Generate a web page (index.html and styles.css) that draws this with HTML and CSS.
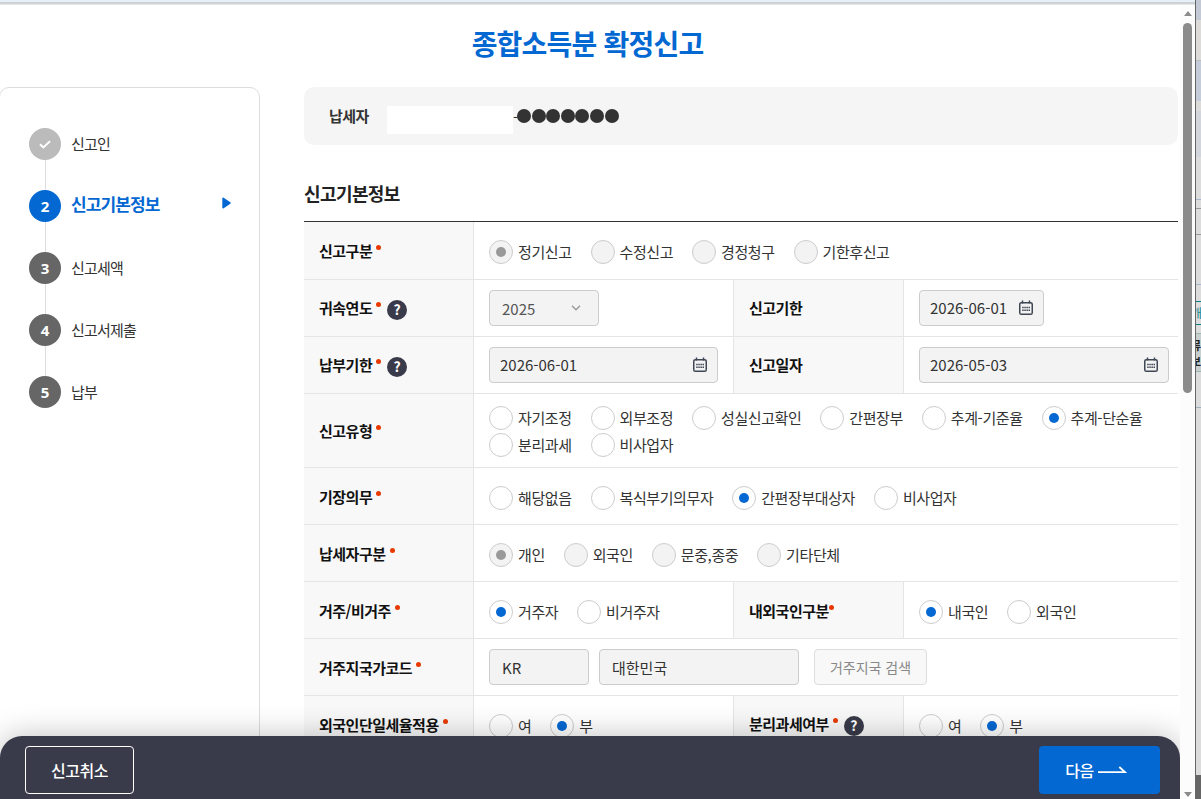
FILE: index.html
```html
<!DOCTYPE html>
<html lang="ko">
<head>
    <meta charset="UTF-8">
    <meta name="viewport" content="width=device-width, initial-scale=1.0">
    <title>종합소득분 확정신고</title>
    <link rel="stylesheet" href="styles.css">
</head>
<body>
    <svg width="0" height="0" class="defs">
        <symbol id="ico-cal" viewBox="0 0 16 16">
            <rect x="1.75" y="2.75" width="12.5" height="11.5" rx="1.6" fill="none" stroke="#3f4654" stroke-width="1.5"/>
            <path d="M4.5 .5v3M11.5 .5v3" stroke="#3f4654" stroke-width="1.5"/>
            <path d="M4.2 7.5h8M4.2 10.3h8" stroke="#3f4654" stroke-width="1.5" stroke-dasharray="1.5 .6"/>
        </symbol>
    </svg>

    <div class="window">
        <div class="popup">
            <h1>종합소득분 확정신고</h1>
            <div class="container">
                <aside class="steps">
                    <ol>
                        <li class="done"><span class="num"><svg width="12" height="9" viewBox="0 0 12 9"><path d="M1 4.2 4.3 7.4 11 1.2" fill="none" stroke="#fff" stroke-width="2"/></svg></span><span class="name">신고인</span></li>
                        <li class="on"><span class="num">2</span><span class="name">신고기본정보</span><svg class="arrow" width="9" height="12" viewBox="0 0 9 12"><path d="M1.2 1.4 7.8 6 1.2 10.6z" fill="#0468d2" stroke="#0468d2" stroke-width="1.8" stroke-linejoin="round"/></svg></li>
                        <li><span class="num">3</span><span class="name">신고세액</span></li>
                        <li><span class="num">4</span><span class="name">신고서제출</span></li>
                        <li><span class="num">5</span><span class="name">납부</span></li>
                    </ol>
                </aside>

                <main>
                    <div class="payer">
                        <strong>납세자</strong>
                        <span class="blank"></span>
                        <span class="hyphen">-</span>
                        <span class="mask"><i></i><i></i><i></i><i></i><i></i><i></i><i></i></span>
                    </div>

                    <h2>신고기본정보</h2>
                    <table>
                        <colgroup><col class="c1"><col class="c2"><col class="c3"><col class="c4"></colgroup>
                        <tr class="first">
                            <th>신고구분<b class="req"></b></th>
                            <td colspan="3"><div class="radios">
                                <label class="dis on"><i></i>정기신고</label>
                                <label class="dis"><i></i>수정신고</label>
                                <label class="dis"><i></i>경정청구</label>
                                <label class="dis"><i></i>기한후신고</label>
                            </div></td>
                        </tr>
                        <tr>
                            <th>귀속연도<b class="req"></b><span class="help">?</span></th>
                            <td><div class="field select">2025<svg width="10" height="6" viewBox="0 0 10 6"><path d="M1 .8 5 4.8 9 .8" fill="none" stroke="#999" stroke-width="1.4"/></svg></div></td>
                            <th class="sub plain">신고기한</th>
                            <td><div class="field date short"><span>2026-06-01</span><svg width="16" height="16"><use href="#ico-cal"/></svg></div></td>
                        </tr>
                        <tr>
                            <th>납부기한<b class="req"></b><span class="help">?</span></th>
                            <td><div class="field date"><span>2026-06-01</span><svg width="16" height="16"><use href="#ico-cal"/></svg></div></td>
                            <th class="sub plain">신고일자</th>
                            <td><div class="field date long"><span>2026-05-03</span><svg width="16" height="16"><use href="#ico-cal"/></svg></div></td>
                        </tr>
                        <tr class="tall">
                            <th>신고유형<b class="req"></b></th>
                            <td colspan="3"><div class="radios">
                                <label><i></i>자기조정</label>
                                <label><i></i>외부조정</label>
                                <label><i></i>성실신고확인</label>
                                <label><i></i>간편장부</label>
                                <label><i></i>추계-기준율</label>
                                <label class="on"><i></i>추계-단순율</label>
                                <label><i></i>분리과세</label>
                                <label><i></i>비사업자</label>
                            </div></td>
                        </tr>
                        <tr>
                            <th>기장의무<b class="req"></b></th>
                            <td colspan="3"><div class="radios">
                                <label><i></i>해당없음</label>
                                <label><i></i>복식부기의무자</label>
                                <label class="on"><i></i>간편장부대상자</label>
                                <label><i></i>비사업자</label>
                            </div></td>
                        </tr>
                        <tr>
                            <th>납세자구분<b class="req"></b></th>
                            <td colspan="3"><div class="radios">
                                <label class="dis on"><i></i>개인</label>
                                <label class="dis"><i></i>외국인</label>
                                <label class="dis"><i></i>문중,종중</label>
                                <label class="dis"><i></i>기타단체</label>
                            </div></td>
                        </tr>
                        <tr>
                            <th>거주/비거주<b class="req"></b></th>
                            <td><div class="radios">
                                <label class="on"><i></i>거주자</label>
                                <label><i></i>비거주자</label>
                            </div></td>
                            <th class="sub">내외국인구분<b class="req tight"></b></th>
                            <td><div class="radios">
                                <label class="on"><i></i>내국인</label>
                                <label><i></i>외국인</label>
                            </div></td>
                        </tr>
                        <tr>
                            <th>거주지국가코드<b class="req"></b></th>
                            <td colspan="3"><div class="nation">
                                <div class="field code">KR</div>
                                <div class="field country">대한민국</div>
                                <button class="btn-search" disabled>거주지국 검색</button>
                            </div></td>
                        </tr>
                        <tr>
                            <th>외국인단일세율적용<b class="req"></b></th>
                            <td><div class="radios">
                                <label><i></i>여</label>
                                <label class="on"><i></i>부</label>
                            </div></td>
                            <th class="sub">분리과세여부<b class="req"></b><span class="help">?</span></th>
                            <td><div class="radios">
                                <label><i></i>여</label>
                                <label class="on"><i></i>부</label>
                            </div></td>
                        </tr>
                    </table>
                </main>
            </div>

            <div class="bottom-bar">
                <button class="btn-cancel">신고취소</button>
                <button class="btn-next">다음<svg width="29" height="8" viewBox="0 0 29 8"><path d="M0 6.2h27L21.3 1" fill="none" stroke="#fff" stroke-width="1.8"/></svg></button>
            </div>
        </div>

        <div class="scrollbar">
            <span class="up"></span>
            <span class="thumb"></span>
            <span class="down"></span>
        </div>

        <!-- strip of the parent page left visible beside the popup -->
        <div class="behind">
            <div class="b-top"></div>
            <div class="b-head"></div>
            <div class="b-blue"></div>
            <div class="b-pale"></div>
            <div class="b-rows"></div>
            <div class="b-line"></div>
            <div class="b-tab"><span>개</span></div>
            <div class="b-cell"><span>류</span><span>보</span></div>
            <div class="b-gap"></div>
            <div class="b-body"></div>
            <div class="b-foot"></div>
        </div>
    </div>
</body>
</html>
```

FILE: styles.css
```css
* {
    box-sizing: border-box;
}

body {
    margin: 0;
    height: 799px;
    overflow: hidden;
    font-family: "Noto Sans CJK KR", sans-serif;
    font-size: 15px;
    letter-spacing: -0.5px;
    color: #333;
    background: #fff;
}

h1, h2, ol {
    margin: 0;
    padding: 0;
}

i {
    font-style: normal;
}

button {
    font-family: inherit;
    letter-spacing: inherit;
    padding: 0;
}

.defs {
    position: absolute;
}

.window {
    display: flex;
    height: 799px;
}

/* popup */
.popup {
    position: relative;
    width: 1180px;
    height: 799px;
    overflow: hidden;
    border-top: 2px solid #e6eef8;
    box-shadow: inset 0 2px #ced2d5, inset 0 3px #e6e8e8;
}

h1 {
    height: 85px;
    padding-right: 5px;
    line-height: 82px;
    text-align: center;
    font-size: 28px;
    font-weight: 700;
    letter-spacing: -0.8px;
    color: #0468d2;
}

.container {
    display: flex;
    gap: 44px;
}

/* left steps */
.steps {
    width: 261px;
    height: 760px;
    margin-left: -1px;
    padding: 40px 28px 0 29px;
    border: 1px solid #ddd;
    border-radius: 10px;
}

.steps ol {
    list-style: none;
}

.steps li {
    position: relative;
    display: flex;
    align-items: center;
    height: 32px;
    margin-bottom: 30px;
    letter-spacing: -0.8px;
}

.steps li + li::before {
    content: "";
    position: absolute;
    left: 16px;
    top: -30px;
    width: 1px;
    height: 30px;
    background: #ddd;
}

.num {
    display: flex;
    align-items: center;
    justify-content: center;
    width: 32px;
    height: 32px;
    margin-right: 10px;
    padding-bottom: 1px;
    border-radius: 50%;
    background: #666;
    color: #fff;
    font-family: "Noto Sans", sans-serif;
    font-weight: 700;
    letter-spacing: 0;
}

.name {
    margin-top: -2px;
}

.done .num {
    padding-bottom: 0;
    background: #bbb;
}

.steps .on .num {
    background: #0468d2;
}

.steps .on .name {
    font-size: 17px;
    font-weight: 700;
    letter-spacing: -0.9px;
    color: #0468d2;
    margin-top: -5px;
}

.arrow {
    margin: -7px 0 0 auto;
}

/* content */
main {
    width: 874px;
}

.payer {
    display: flex;
    align-items: center;
    height: 58px;
    padding-left: 25px;
    border-radius: 10px;
    background: #f5f5f5;
}

.payer strong {
    width: 58px;
    margin-top: -2px;
    font-weight: 700;
}

.blank {
    width: 126px;
    height: 28px;
    margin-top: 7px;
    background: #fff;
}

.hyphen {
    width: 4px;
}

.mask {
    display: flex;
    gap: 0.6px;
}

.mask i {
    width: 14px;
    height: 14px;
    border-radius: 50%;
    background: #333;
}

h2 {
    height: 76px;
    padding-top: 34px;
    line-height: 28px;
    font-size: 18px;
    font-weight: 700;
    letter-spacing: -0.6px;
    color: #222;
}

table {
    width: 874px;
    table-layout: fixed;
    border-collapse: separate;
    border-spacing: 0;
    border-top: 1px solid #333;
}

.c1 { width: 170px; }
.c2 { width: 259px; }
.c3 { width: 171px; }
.c4 { width: 274px; }

tr {
    height: 57px;
}

tr.first {
    height: 58px;
}

tr.tall {
    height: 74px;
}

th, td {
    padding: 0 0 0 15px;
    border-bottom: 1px solid #e5e5e5;
    vertical-align: middle;
    text-align: left;
}

th {
    border-right: 1px solid #e5e5e5;
    background: #f8f8f8;
    font-weight: 700;
    color: #111;
    white-space: nowrap;
}

th.sub {
    border-left: 1px solid #e5e5e5;
}

th.plain {
    padding-bottom: 2px;
}

.req {
    display: inline-block;
    width: 5px;
    height: 5px;
    margin-left: 4px;
    border-radius: 50%;
    background: #e83a00;
    vertical-align: 7px;
}

.req.tight {
    margin-left: 0;
}

.help {
    display: inline-block;
    width: 20px;
    height: 20px;
    margin-left: 6px;
    border-radius: 50%;
    background: #393a4a;
    color: #fff;
    font-size: 14px;
    line-height: 19px;
    text-align: center;
    letter-spacing: 0;
    vertical-align: -1px;
}

.radios {
    display: flex;
    flex-wrap: wrap;
    row-gap: 3px;
    padding-top: 4px;
    letter-spacing: -0.4px;
}

.first .radios,
.tall .radios {
    padding-top: 2px;
}

.radios label {
    display: flex;
    align-items: flex-start;
    height: 24px;
    margin-right: 18.9px;
    line-height: 24px;
    white-space: nowrap;
}

.radios i {
    display: flex;
    align-items: center;
    justify-content: center;
    width: 24px;
    height: 24px;
    margin-right: 5px;
    border: 1px solid #ccc;
    border-radius: 50%;
    background: #fff;
}

.radios .dis i {
    background: #f3f3f3;
}

.radios .on i::after {
    content: "";
    width: 10px;
    height: 10px;
    border-radius: 50%;
    background: #0468d2;
}

.radios .dis.on i::after {
    background: #999;
}

/* inputs */
.field {
    display: flex;
    align-items: center;
    height: 36px;
    padding: 0 12px;
    border: 1px solid #ccc;
    border-radius: 4px;
    background: #f3f3f3;
    letter-spacing: 0;
}

.select {
    justify-content: space-between;
    width: 110px;
    padding-right: 17px;
    color: #555;
}

.date {
    justify-content: space-between;
    width: 229px;
    padding: 0 9px 0 10px;
}

.date span {
    margin-top: -2px;
}

.date.short {
    width: 125px;
}

.date.long {
    width: 250px;
}

.nation {
    display: flex;
}

.code {
    width: 100px;
    margin-right: 10px;
}

.country {
    width: 200px;
    margin-right: 15px;
}

.btn-search {
    width: 113px;
    height: 36px;
    border: 1px solid #ddd;
    border-radius: 4px;
    background: #f8f8f8;
    color: #888;
    font-size: 14px;
    letter-spacing: 0;
}

/* fixed bar over the form */
.bottom-bar {
    position: absolute;
    left: 0;
    right: 0;
    bottom: 0;
    display: flex;
    justify-content: space-between;
    height: 63px;
    padding: 10px 20px 5px 25px;
    border-radius: 22px 22px 0 0;
    background: #393a4a;
    box-shadow: 0 0 30px rgba(0, 0, 0, 0.25);
}

.bottom-bar button {
    height: 48px;
    border-radius: 4px;
    color: #fff;
    font-size: 16px;
    font-weight: 500;
}

.btn-cancel {
    width: 109px;
    border: 1px solid #fff;
    background: none;
}

.bottom-bar .btn-next {
    display: flex;
    align-items: center;
    justify-content: center;
    gap: 4px;
    width: 121px;
    padding-right: 7px;
    border: 0;
    background: #0468d2;
}

/* scrollbar */
.scrollbar {
    display: flex;
    flex-direction: column;
    align-items: center;
    width: 15px;
    padding: 9px 0 2px;
    background: #fcfcfc;
    border-top: 2px solid #e6eef8;
    box-shadow: inset 0 2px #ced2d5, inset 0 3px #e6e8e8;
}

.up, .down {
    border: 4.5px solid transparent;
    border-top-width: 0;
    border-bottom: 5px solid #8b8b8b;
}

.thumb {
    width: 9px;
    height: 370px;
    margin-top: 7px;
    border-radius: 5px;
    background: #8b8b8b;
}

.down {
    margin-top: auto;
    border-top: 5px solid #8b8b8b;
    border-bottom: 0;
}

/* parent page */
.behind {
    width: 6px;
    border-left: 1px solid #666;
    overflow: hidden;
    background: #dcdcdc;
}

.b-top {
    height: 20px;
    background: #c3cad6;
}

.b-head {
    height: 41px;
    background: #dcdbda;
    border-bottom: 1px solid #bbb;
}

.b-blue {
    height: 40px;
    background: #c3ccd8;
}

.b-pale {
    height: 56px;
    border-top: 10px solid #dcdbda;
    background: #d2d5dc;
}

.b-rows {
    height: 86px;
    margin-top: 42px;
    border-top: 1px solid #a9b4d0;
    border-bottom: 1px solid #a9b4d0;
    background: linear-gradient(#dcdcdc 8px, #999 8px, #999 9px, #dcdcdc 9px, #dcdcdc 34px, #999 34px, #999 35px, #dcdcdc 35px);
}

.b-line {
    height: 16px;
}

.b-tab {
    height: 24px;
    border: solid #0b8080;
    border-width: 1px 0;
    color: #168a90;
    font-size: 12px;
    line-height: 22px;
}

.b-cell {
    height: 39px;
    margin-top: 8px;
    padding-top: 3px;
    border: solid #9bb5b2;
    border-width: 1px 0;
    background: #c7d0ce;
    color: #222;
    font-size: 11px;
    font-weight: 700;
    line-height: 16px;
}

.b-cell span, .b-tab span {
    display: block;
    margin-left: -5px;
}

.b-gap {
    height: 36px;
    border-bottom: 1px solid #9fb0b8;
}

.b-body {
    height: 367px;
}

.b-foot {
    height: 24px;
    background: #666;
}
```
